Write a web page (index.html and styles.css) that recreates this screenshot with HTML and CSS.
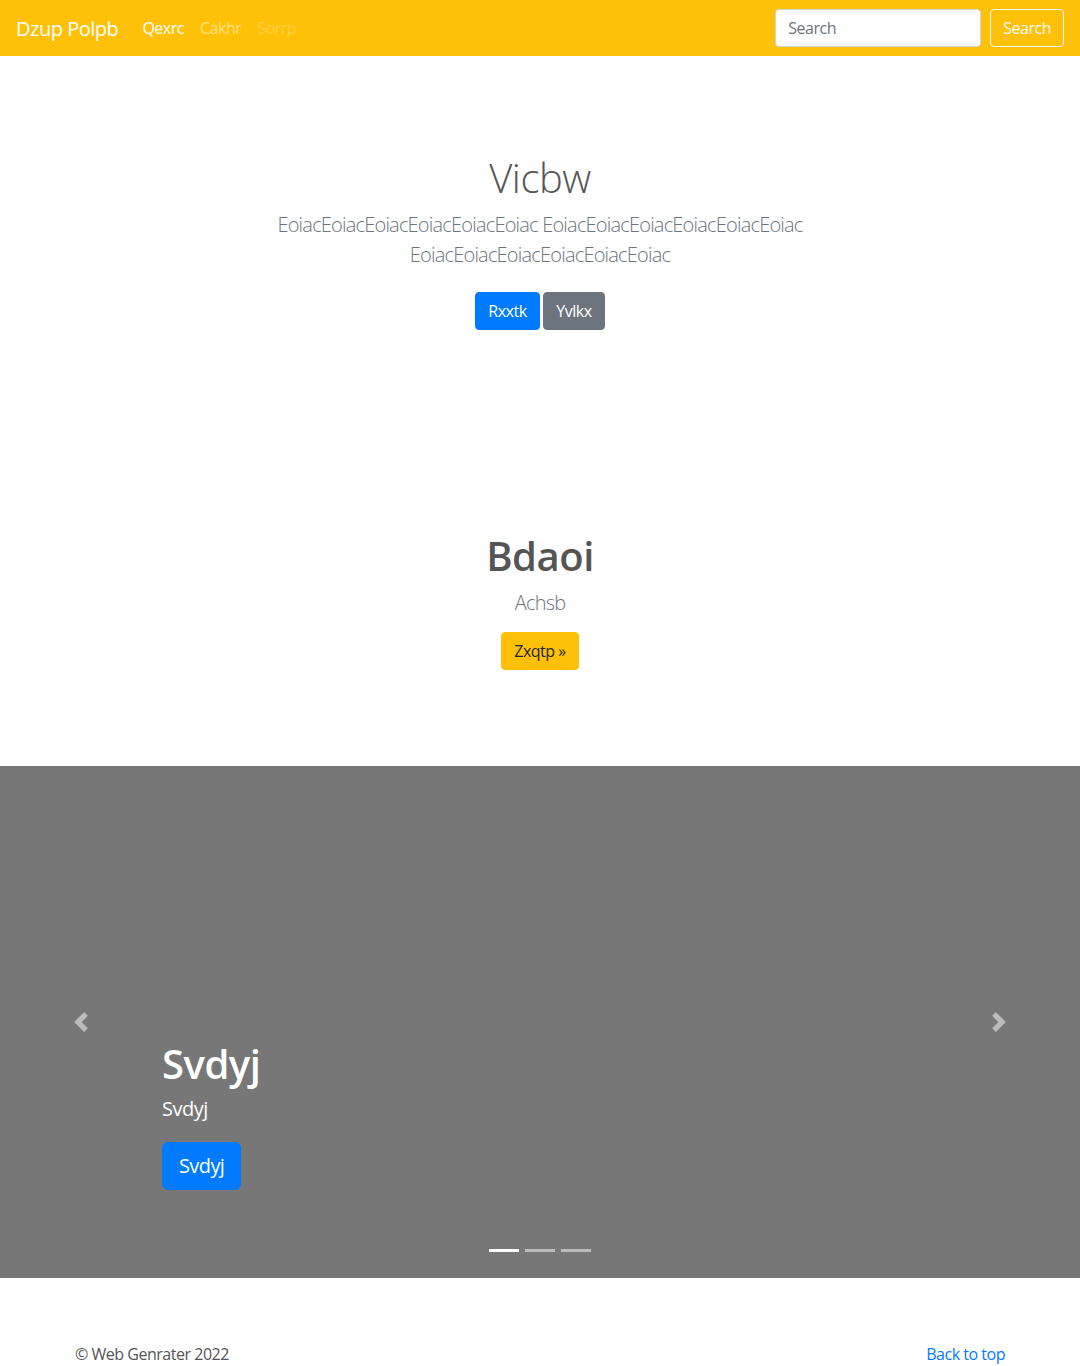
FILE: index.html
```html
<!DOCTYPE html>
<html lang="en">
<head>
<meta charset="utf-8">
<title>Dzup Polpb</title>
<link rel="stylesheet" href="styles.css">
</head>
<body>
<header>
  <nav class="navbar">
    <a class="brand" href="#">Dzup Polpb</a>
    <ul class="nav">
      <li><a class="nav-link active" href="#">Qexrc</a></li>
      <li><a class="nav-link" href="#">Cakhr</a></li>
      <li><a class="nav-link disabled" href="#">Sorrp</a></li>
    </ul>
    <form class="search">
      <input class="search-input" type="text" placeholder="Search">
      <button class="btn btn-outline-light" type="button">Search</button>
    </form>
  </nav>
</header>
<main>
  <section class="jumbo">
    <div class="container">
      <h1 class="jumbo-title">Vicbw</h1>
      <p class="lead muted narrow">EoiacEoiacEoiacEoiacEoiacEoiac EoiacEoiacEoiacEoiacEoiacEoiac EoiacEoiacEoiacEoiacEoiacEoiac</p>
      <p class="actions">
        <a class="btn btn-primary" href="#">Rxxtk</a>
        <a class="btn btn-secondary" href="#">Yvlkx</a>
      </p>
    </div>
  </section>
  <section class="jumbo">
    <div class="container">
      <h1 class="jumbo-title bold">Bdaoi</h1>
      <p class="lead muted">Achsb</p>
      <p class="actions-plain"><a class="btn btn-warning" href="#">Zxqtp &raquo;</a></p>
    </div>
  </section>
  <div class="carousel">
    <ol class="indicators">
      <li class="active"></li>
      <li></li>
      <li></li>
    </ol>
    <div class="slide">
      <div class="container">
        <div class="caption">
          <h1 class="caption-title">Svdyj</h1>
          <p class="caption-text">Svdyj</p>
          <p class="caption-actions"><a class="btn btn-lg btn-primary" href="#">Svdyj</a></p>
        </div>
      </div>
    </div>
    <a class="control control-prev" href="#">
      <svg class="control-icon" viewBox="0 0 8 8" width="20" height="20"><path fill="#fff" d="M5.25 0l-4 4 4 4 1.5-1.5L4.25 4l2.5-2.5L5.25 0z"/></svg>
    </a>
    <a class="control control-next" href="#">
      <svg class="control-icon" viewBox="0 0 8 8" width="20" height="20"><path fill="#fff" d="M2.75 0l-1.5 1.5L3.75 4l-2.5 2.5L2.75 8l4-4-4-4z"/></svg>
    </a>
  </div>
</main>
<footer class="container footer">
  <p class="footer-left">&copy; Web Genrater 2022</p>
  <p class="footer-right"><a href="#">Back to top</a></p>
</footer>
</body>
</html>
```
FILE: styles.css
```css
* { box-sizing: border-box; }
html, body { margin: 0; }
body {
  font-family: "Open Sans", "Noto Sans", "Liberation Sans", sans-serif;
  font-size: 16px;
  line-height: 1.5;
  letter-spacing: -0.03em;
  color: #212529;
  background: #fff;
}
a { text-decoration: none; color: #007bff; }
p { margin: 0 0 16px; }
h1 { margin: 0 0 8px; font-size: 40px; line-height: 1.2; }

.container {
  width: 100%;
  max-width: 960px;
  margin: 0 auto;
  padding: 0 15px;
}

/* navbar */
.navbar {
  height: 56px;
  background: #ffc107;
  display: flex;
  align-items: center;
  padding: 8px 16px;
}
.brand {
  color: #fff;
  font-size: 20px;
  line-height: 30px;
  margin-right: 16px;
  padding: 6px 0 4px;
}
.nav {
  list-style: none;
  margin: 0;
  padding: 0;
  display: flex;
  flex: 1;
}
.nav-link {
  display: block;
  padding: 8px;
  color: rgba(255,255,255,.5);
  font-size: 16px;
}
.nav-link.active { color: #fff; }
.nav-link.disabled { color: rgba(255,255,255,.25); }
.search { display: flex; align-items: center; }
.search-input {
  width: 206px;
  height: 38px;
  padding: 6px 12px;
  font: inherit;
  font-size: 16px;
  letter-spacing: -0.03em;
  color: #495057;
  border: 1px solid #ced4da;
  border-radius: 4px;
  margin-right: 9px;
  background: #fff;
}
.search-input::placeholder { color: #6c757d; }

/* buttons */
.btn {
  display: inline-block;
  font-family: inherit;
  font-size: 16px;
  line-height: 24px;
  letter-spacing: -0.03em;
  padding: 6px 12px;
  border: 1px solid transparent;
  border-radius: 4px;
  vertical-align: middle;
  cursor: pointer;
}
.btn-outline-light { background: transparent; color: #f8f9fa; border-color: #f8f9fa; }
.btn-primary { background: #007bff; border-color: #007bff; color: #fff; }
.btn-secondary { background: #6c757d; border-color: #6c757d; color: #fff; }
.btn-warning { background: #ffc107; border-color: #ffc107; color: #212529; }
.btn-lg { font-size: 20px; line-height: 30px; padding: 8px 16px; border-radius: 6px; }

/* jumbotron sections */
.jumbo {
  text-align: center;
  padding: 96px 0;
}
.jumbo-title { font-weight: 300; color: #555; padding-top: 2px; margin-bottom: 6px; }
.jumbo-title.bold { font-weight: 600; }
.lead {
  font-size: 20px;
  font-weight: 300;
  line-height: 30px;
  letter-spacing: -0.04em;
  padding-top: 2px;
  margin-bottom: 14px;
}
.muted { color: #6c757d; }
.narrow { max-width: 610px; margin-left: auto; margin-right: auto; }
.actions { margin: 0; }
.actions .btn { margin: 8px 0; }
.actions-plain { margin: 0; }

/* carousel */
.carousel {
  position: relative;
  height: 512px;
  background: #777;
  margin-bottom: 64px;
}
.slide { position: relative; height: 100%; }
.caption {
  position: absolute;
  left: 15%;
  right: 15%;
  bottom: 52px;
  padding: 20px 0;
  color: #fff;
  text-align: left;
  z-index: 10;
}
.caption-title { font-weight: 600; color: #fff; margin-bottom: 6px; }
.caption-text { font-size: 20px; line-height: 30px; margin-bottom: 18px; }
.control {
  position: absolute;
  top: 0;
  bottom: 0;
  width: 15%;
  display: flex;
  align-items: center;
  justify-content: center;
  opacity: .5;
  z-index: 5;
}
.control-prev { left: 0; }
.control-next { right: 0; }
.control-icon { display: block; }
.indicators {
  position: absolute;
  left: 0;
  right: 0;
  bottom: 16px;
  margin: 0;
  padding: 0;
  list-style: none;
  display: flex;
  justify-content: center;
  z-index: 15;
}
.indicators li {
  width: 30px;
  height: 3px;
  margin: 0 3px;
  background: #fff;
  opacity: .5;
  background-clip: padding-box;
  border-top: 10px solid transparent;
  border-bottom: 10px solid transparent;
  box-sizing: content-box;
}
.indicators li.active { opacity: 1; }

/* footer */
.footer {
  display: flex;
  justify-content: space-between;
}
.footer-left { color: #555; }
```
